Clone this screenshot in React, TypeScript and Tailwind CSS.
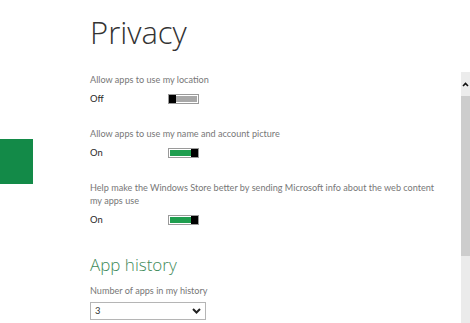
import React from "react";

function Toggle({ on }: { on: boolean }) {
  return (
    <div className="w-[31px] h-[10px] border border-[#9a9a9a] flex bg-white">
      {on ? (
        <>
          <div className="flex-1 bg-[#1f9e4f] m-[1px] mr-0"></div>
          <div className="w-[7px] bg-black"></div>
        </>
      ) : (
        <>
          <div className="w-[7px] bg-black"></div>
          <div className="flex-1 bg-[#a8a8a8] m-[1px] ml-0"></div>
        </>
      )}
    </div>
  );
}

function Setting({
  label,
  value,
  on,
}: {
  label: React.ReactNode;
  value: string;
  on: boolean;
}) {
  return (
    <div className="flex flex-col">
      <div className="text-[9.1px] leading-[13px] text-[#777]">{label}</div>
      <div className="flex items-center mt-[7px] h-[12px]">
        <div className="w-[78px] text-[9.4px] text-[#2a2a2a]">{value}</div>
        <Toggle on={on} />
      </div>
    </div>
  );
}

export default function App() {
  return (
    <div
      className="w-[470px] h-[323px] bg-white flex overflow-hidden"
      style={{ fontFamily: 'Lato, "Open Sans", sans-serif' }}
    >
      <div className="w-[33px] shrink-0 pt-[139px]">
        <div className="w-[33px] h-[45px] bg-[#138a48]"></div>
      </div>
      <div className="flex-1 pl-[57px] pt-[17px]">
        <div
          className="text-[31px] leading-[30px] font-light text-[#333]"
          style={{ fontFamily: '"Open Sans", sans-serif' }}
        >
          Privacy
        </div>
        <div className="mt-[26px] flex flex-col gap-[22px]">
          <Setting label="Allow apps to use my location" value="Off" on={false} />
          <Setting
            label="Allow apps to use my name and account picture"
            value="On"
            on={true}
          />
          <Setting
            label={
              <>
                Help make the Windows Store better by sending Microsoft info about the web content
                <br />
                my apps use
              </>
            }
            value="On"
            on={true}
          />
        </div>
        <div
          className="mt-[29px] text-[17px] leading-[20px] font-light text-[#3e8a59]"
          style={{ fontFamily: '"Open Sans", sans-serif' }}
        >
          App history
        </div>
        <div className="mt-[9px] text-[9.1px] leading-[13px] text-[#777]">
          Number of apps in my history
        </div>
        <div className="mt-[5px] w-[116px] h-[18px] border border-[#b5b5b5] flex items-center justify-between px-[4px]">
          <span className="text-[9.4px] text-[#333]">3</span>
          <svg width="9" height="6" viewBox="0 0 9 6">
            <path d="M1 1 L4.5 4.5 L8 1" stroke="#222" strokeWidth="2" fill="none" />
          </svg>
        </div>
      </div>
      <div className="w-[9px] shrink-0 pt-[72px] flex flex-col">
        <div className="h-[24px] bg-[#ececec] flex items-center justify-center">
          <svg width="7" height="5" viewBox="0 0 7 5">
            <path d="M1 4 L3.5 1.5 L6 4" stroke="#111" strokeWidth="1.6" fill="none" />
          </svg>
        </div>
        <div className="h-[160px] bg-[#cdcdcd]"></div>
        <div className="flex-1 bg-[#ebebeb]"></div>
      </div>
    </div>
  );
}
